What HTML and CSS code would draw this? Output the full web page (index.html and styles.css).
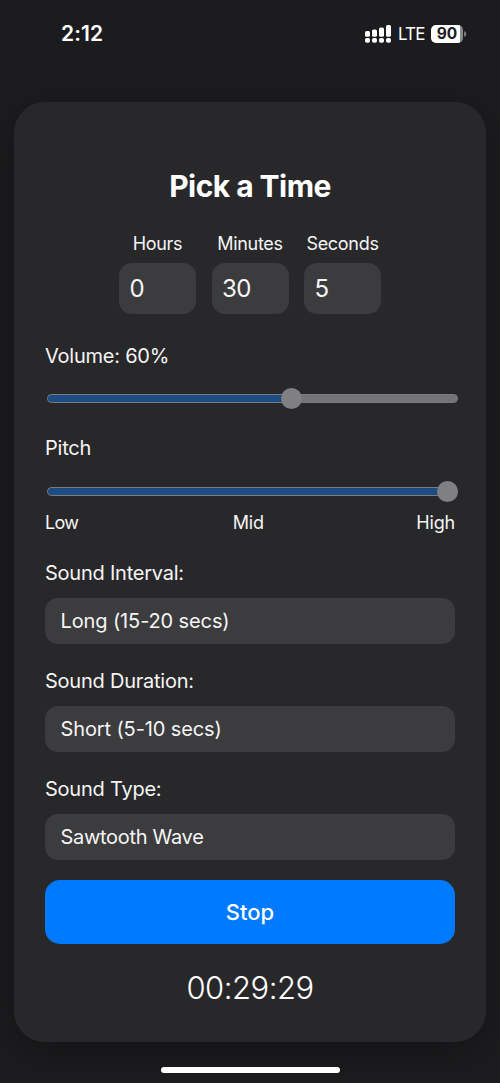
FILE: index.html
```html
<!DOCTYPE html>
<html lang="en">
<head>
<meta charset="utf-8">
<meta name="viewport" content="width=device-width, initial-scale=1">
<title>Pick a Time</title>
<link rel="stylesheet" href="styles.css">
</head>
<body>
<div class="screen">
  <header class="status">
    <span class="clock">2:12</span>
    <div class="indicators">
      <svg class="signal" width="27" height="18" viewBox="0 0 27 18" fill="#fff">
        <rect x="0" y="6" width="5" height="5.8" rx="1.6"/><rect x="7" y="4.5" width="5" height="7.3" rx="1.6"/><rect x="14" y="2.5" width="5" height="9.3" rx="1.6"/><rect x="21" y="0" width="5" height="11.8" rx="1.6"/>
        <rect x="0" y="13" width="5" height="4.8" rx="1.8"/><rect x="7" y="13" width="5" height="4.8" rx="1.8"/><rect x="14" y="13" width="5" height="4.8" rx="1.8"/><rect x="21" y="13" width="5" height="4.8" rx="1.8"/>
      </svg>
      <span class="network">LTE</span>
      <div class="battery"><span class="level">90</span></div>
      <svg class="tip" width="3" height="6" viewBox="0 0 3 6"><path d="M0 0Q2.5 1 2.5 3T0 6Z" fill="#77777a"/></svg>
    </div>
  </header>
  <main class="card">
    <h1 class="title">Pick a Time</h1>
    <div class="times">
      <div class="unit"><span class="unit-name">Hours</span><div class="number">0</div></div>
      <div class="unit"><span class="unit-name">Minutes</span><div class="number">30</div></div>
      <div class="unit"><span class="unit-name">Seconds</span><div class="number">5</div></div>
    </div>
    <div class="label volume">Volume: 60%</div>
    <div class="slider"><div class="track"><div class="fill" style="width:244px"></div></div><div class="thumb" style="left:236px"></div></div>
    <div class="label pitch">Pitch</div>
    <div class="slider"><div class="track"><div class="fill" style="width:400px"></div></div><div class="thumb" style="left:392px"></div></div>
    <div class="scale"><span class="low">Low</span><span>Mid</span><span>High</span></div>
    <section class="field"><div class="label">Sound Interval:</div><div class="select"><span>Long (15-20 secs)</span></div></section>
    <section class="field"><div class="label">Sound Duration:</div><div class="select"><span>Short (5-10 secs)</span></div></section>
    <section class="field"><div class="label">Sound Type:</div><div class="select wave"><span>Sawtooth Wave</span></div></section>
    <button class="stop">Stop</button>
    <div class="countdown">00:29:29</div>
  </main>
  <div class="home"></div>
</div>
</body>
</html>
```
FILE: styles.css
```css
* { box-sizing: border-box; }
body { margin: 0; background: #1c1c1e; color: #f5f5f5; font-family: Inter, "Liberation Sans", sans-serif; }
.screen { display: flex; flex-direction: column; align-items: center; height: 1083px; overflow: hidden; }
.status { display: flex; justify-content: space-between; align-items: flex-start; width: 100%; height: 102px; padding: 22px 33px 0 61px; color: #fff; flex: none; }
.clock { font-size: 21px; font-weight: 600; line-height: 24px; letter-spacing: 0.1px; }
.indicators { display: flex; align-items: center; height: 23px; }
.signal { margin-right: 6px; }
.network { width: 27px; margin-right: 6px; font-size: 17px; font-weight: 400; line-height: 24px; letter-spacing: -0.9px; }
.battery { display: flex; align-items: center; justify-content: center; width: 32px; height: 18px; border-radius: 5px; background: linear-gradient(90deg, #fff 90%, #8a8a8c 90%); }
.level { color: #1c1c1e; font-size: 15.5px; font-weight: 700; line-height: 18px; }
.tip { margin-left: 1px; }
.card { width: 472px; height: 939.5px; flex: none; padding: 63px 31px 0; border-radius: 31px; background: #28282a; box-shadow: 0 10px 38px rgba(0, 0, 0, 0.3); }
.title { margin: 0; color: #fff; font-size: 30px; font-weight: 700; line-height: 42px; letter-spacing: -0.55px; text-align: center; }
.times { display: flex; justify-content: center; gap: 15.5px; margin-top: 26px; }
.unit { width: 77px; display: flex; flex-direction: column; align-items: center; }
.unit-name { font-size: 18px; line-height: 22px; letter-spacing: -0.3px; white-space: nowrap; }
.number { width: 77px; height: 51px; margin-top: 8px; padding-left: 10.5px; border-radius: 13px; background: #3c3c3e; font-size: 24px; line-height: 52px; letter-spacing: -0.6px; }
.label { font-size: 20px; line-height: 26px; letter-spacing: -0.23px; white-space: nowrap; }
.volume { margin-top: 29px; }
.pitch { margin-top: 26px; }
.slider { position: relative; height: 21px; margin-top: 19px; padding: 6px 0 0 2px; }
.pitch + .slider { margin-top: 19.5px; }
.track { width: 411px; height: 9px; border: 1px solid #7c7c7f; border-radius: 5px; background: #747476; }
.fill { height: 7px; border-radius: 4px 0 0 4px; background: #1d4b84; }
.thumb { position: absolute; top: 0; width: 21px; height: 21px; border-radius: 50%; background: #808083; }
.scale { display: flex; justify-content: space-between; margin-top: 10.5px; font-size: 18px; line-height: 22px; letter-spacing: -0.2px; }
.low { letter-spacing: -0.7px; padding-right: 2px; }
.field { height: 107.75px; }
.scale + .field { margin-top: 26.25px; }
.select { height: 46px; margin-top: 12px; padding-left: 15.5px; border-radius: 13px; background: #3c3c3e; font-size: 20px; line-height: 47px; letter-spacing: -0.12px; }
.wave { letter-spacing: -0.3px; }
.stop { display: block; width: 100%; height: 64px; margin-top: -4px; border: 0; border-radius: 15px; background: #007aff; color: #fff; font: 500 22px/64px Inter, "Liberation Sans", sans-serif; padding: 0; }
.countdown { margin-top: 24px; color: #fff; font-size: 31px; font-weight: 300; line-height: 40px; letter-spacing: -0.5px; text-align: center; }
.home { width: 179px; height: 6.5px; margin-top: 25px; border-radius: 4px; background: #fff; position: relative; flex: none; }
```
